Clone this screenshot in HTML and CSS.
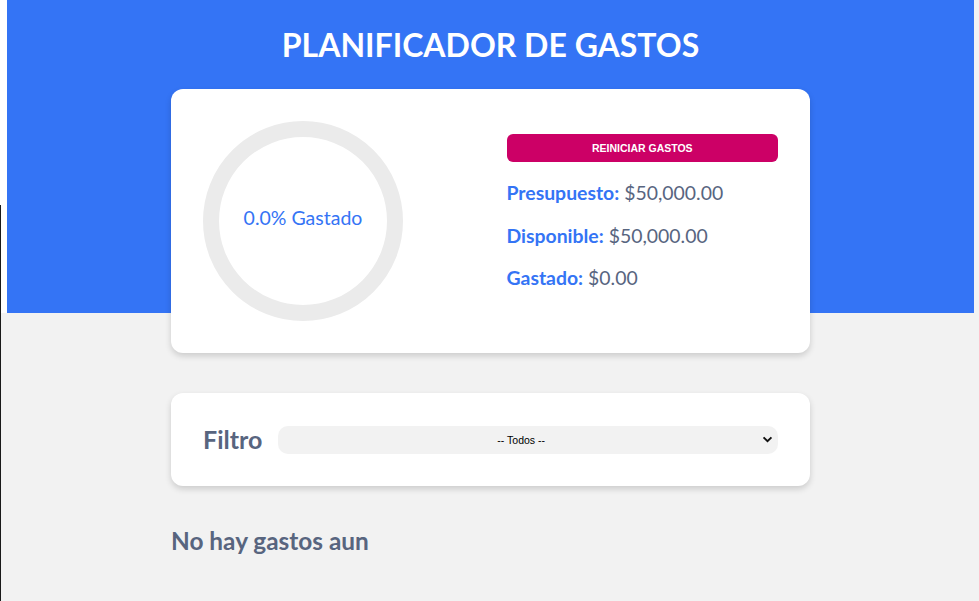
FILE: index.html
```html
<!DOCTYPE html>
<html lang="es">
<head>
<meta charset="utf-8">
<title>Planificador de gastos</title>
<link rel="stylesheet" href="styles.css">
</head>
<body>
<div class="edge-line"></div>
<div class="page">
  <header class="header">
    <h1 class="title">PLANIFICADOR DE GASTOS</h1>
    <section class="card budget">
      <div class="ring">
        <span class="ring-text">0.0% Gastado</span>
      </div>
      <div class="budget-info">
        <button class="reset" type="button">REINICIAR GASTOS</button>
        <p class="line"><span class="key">Presupuesto:</span> $50,000.00</p>
        <p class="line"><span class="key">Disponible:</span> $50,000.00</p>
        <p class="line"><span class="key">Gastado:</span> $0.00</p>
      </div>
    </section>
  </header>
  <main class="main">
    <section class="card filter">
      <label class="filter-label" for="filtro">Filtro</label>
      <select class="filter-select" id="filtro">
        <option>-- Todos --</option>
      </select>
    </section>
    <h2 class="empty">No hay gastos aun</h2>
  </main>
</div>
</body>
</html>
```

FILE: styles.css
```css
* { box-sizing: border-box; }

html, body {
  margin: 0;
  padding: 0;
}

body {
  background: #f2f2f2;
  font-family: Lato, "Noto Sans", sans-serif;
  min-height: 601px;
}

.edge-line {
  position: fixed;
  left: 0;
  top: 205px;
  bottom: 0;
  width: 1px;
  background: #1a1a1a;
}

.page {
  padding: 0 5px 0 7px;
}

.header {
  display: flow-root;
  background: #3474f5;
  box-shadow: -7px 0 0 #fff;
  padding-top: 26px;
}

.title {
  margin: 0;
  color: #fff;
  font-size: 32px;
  font-weight: 700;
  line-height: 1.2;
  text-align: center;
}

.card {
  width: 639px;
  margin: 0 auto;
  background: #fff;
  border-radius: 12px;
  box-shadow: 0 3px 6px rgba(0, 0, 0, 0.16);
  padding: 32px;
}

.budget {
  margin-top: 25px;
  margin-bottom: -40px;
  position: relative;
  display: grid;
  grid-template-columns: 1fr 1fr;
  column-gap: 32px;
  align-items: center;
}

.ring {
  width: 200px;
  height: 200px;
  border: 16px solid #ebebeb;
  border-radius: 50%;
  display: flex;
  align-items: center;
  justify-content: center;
  padding-bottom: 7px;
}

.ring-text {
  color: #3474f5;
  font-size: 19.5px;
}

.budget-info {
  display: flex;
  flex-direction: column;
}

.reset {
  display: block;
  width: 100%;
  height: 28px;
  border: none;
  border-radius: 6px;
  background: #cc0066;
  color: #fff;
  font-family: "Liberation Sans", Arial, sans-serif;
  font-weight: 700;
  font-size: 10.5px;
  padding: 0;
}

.line {
  margin: 19px 0 0;
  font-size: 19.4px;
  line-height: 1.2;
  color: #58657f;
}

.line:last-child {
  margin-bottom: 19px;
}

.key {
  color: #3474f5;
  font-weight: 700;
}

.main {
  padding-top: 80px;
}

.filter {
  display: flex;
  align-items: center;
  gap: 16px;
}

.filter-label {
  font-size: 25px;
  font-weight: 700;
  line-height: 29px;
  color: #58657f;
}

.filter-select {
  flex: 1;
  height: 28px;
  border: none;
  border-radius: 10px;
  background-color: #f2f2f2;
  -webkit-appearance: none;
  appearance: none;
  font-family: "Liberation Sans", Arial, sans-serif;
  font-size: 10.5px;
  color: #000;
  text-align: center;
  text-align-last: center;
  padding: 0 20px 0 6px;
  background-image: url("data:image/svg+xml;utf8,<svg xmlns='http://www.w3.org/2000/svg' width='12' height='8' viewBox='0 0 12 8'><path d='M1.5 1.5 L6 6 L10.5 1.5' fill='none' stroke='%23111' stroke-width='2.2'/></svg>");
  background-repeat: no-repeat;
  background-position: right 5px center;
  background-size: 11px 7px;
}

.empty {
  width: 639px;
  margin: 40px auto 0;
  font-size: 24.4px;
  font-weight: 700;
  line-height: 1.2;
  color: #58657f;
}
```
